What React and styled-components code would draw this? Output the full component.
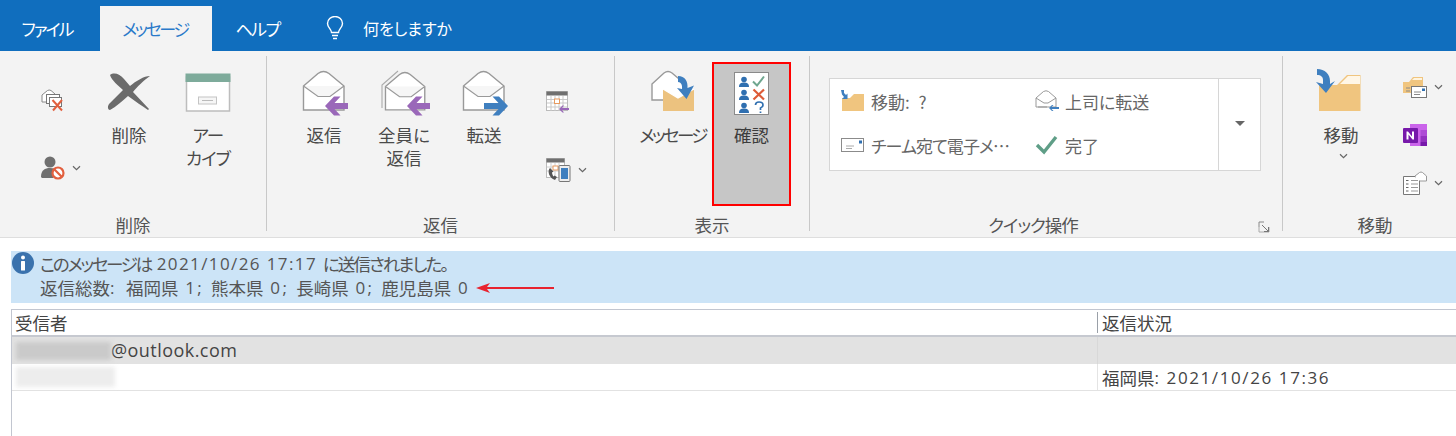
import React from "react";
import styled, { createGlobalStyle } from "styled-components";

const Global = createGlobalStyle`
  html, body { margin: 0; padding: 0; background: #fff; }
  body {
    width: 1456px; height: 436px; overflow: hidden;
    font-family: "Noto Sans CJK JP", "Noto Sans", sans-serif;
    font-feature-settings: "palt";
    color: #444;
  }
  * { box-sizing: border-box; }
`;

const TabBar = styled.div`
  height: 51px; background: #106ebe; display: flex; align-items: flex-end;
`;
const Tab = styled.div`
  height: 45px;
  width: ${p => p.$w}px;
  display: flex; align-items: center; justify-content: center;
  font-size: 17px; padding: 0 ${p => p.$pr || 0}px 1px 0;
  letter-spacing: ${p => p.$ls || 0}px;
  color: ${p => (p.$active ? "#2a79c9" : "#fff")};
  background: ${p => (p.$active ? "#f3f3f3" : "transparent")};
`;
const Search = styled.div`
  height: 45px; margin-left: 22px; display: flex; align-items: center; gap: 19px;
  color: #fff; font-size: 16px; padding-bottom: 1px;
`;

const Ribbon = styled.div`
  height: 187px; background: #f3f3f3; border-bottom: 1px solid #dedede;
  display: flex; align-items: flex-start;
`;
const Group = styled.div`
  width: ${p => p.$w}px; height: 186px; flex: none;
  display: flex; flex-direction: column;
`;
const Body = styled.div`
  height: 164px; display: flex; align-items: flex-start;
  padding: 19px 0 0 ${p => p.$left || 0}px;
`;
const Title = styled.div`
  position: relative;
  height: 22px; line-height: 20px; font-size: 17.5px; color: #555; text-align: center;
  letter-spacing: ${p => p.$ls || 0}px;
  padding: 0 ${p => p.$pr || 0}px 0 ${p => p.$pl || 0}px;
`;
const MoveTitle = styled(Title)`
  width: 174px;
`;
const Sep = styled.div`
  width: 1px; height: 175px; margin-top: 5px; background: #c8c8c8; flex: none;
`;
const Large = styled.div`
  width: ${p => p.$w}px; flex: none; display: flex; flex-direction: column; align-items: center;
  font-size: 17.5px; line-height: 23px; color: #4a4a4a; text-align: center;
`;
const KanaLabel = styled.span`
  letter-spacing: ${p => p.$ls}px;
`;
const IconBox = styled.div`
  height: 48px; width: 100%; margin-bottom: 5px;
  display: flex; justify-content: center; align-items: flex-start;
  padding-left: ${p => p.$nudge || 0}px;
  svg { display: block; }
`;
const MoveIconBox = styled(IconBox)`
  justify-content: flex-start; padding-left: 10px;
`;
const Chevron = styled.svg`
  width: 9px; height: 6px; flex: none; display: block;
`;
const Chev = () => (
  <Chevron viewBox="0 0 9 6">
    <path d="M1 1.2 4.5 4.6 8 1.2" fill="none" stroke="#666" strokeWidth="1.2" />
  </Chevron>
);
const MoveChevron = styled.div`
  margin-top: 7px; margin-left: 4px;
`;
const Small = styled.div`
  flex: none; width: ${p => p.$w}px;
  padding: ${p => p.$top}px 0 0 ${p => p.$left}px;
  display: flex; flex-direction: column; gap: ${p => p.$gap}px;
`;
const SmallItem = styled.div`
  height: 24px; display: flex; align-items: center; gap: 7px;
  svg:first-child { display: block; }
`;
const Confirm = styled.div`
  width: 79px; height: 144px; margin-top: -8px; flex: none;
  border: 2px solid #f00; background: #c6c6c6; padding-top: 8px;
  display: flex; flex-direction: column; align-items: center;
  font-size: 17.5px; line-height: 23px; color: #3c3c3c;
`;
const Gallery = styled.div`
  width: 432px; height: 93px; margin: 8px 0 0 19px;
  background: #fff; border: 1px solid #d6d6d6; display: flex;
`;
const GalleryGrid = styled.div`
  width: 389px; display: grid; grid-template-columns: 194px 1fr; grid-template-rows: 44px 44px;
  padding: 0 0 0 11px; border-right: 1px solid #d6d6d6;
`;
const QuickItem = styled.div`
  display: flex; align-items: center; gap: 6px; font-size: 17px; color: #666; white-space: pre;
  letter-spacing: ${p => p.$ls || 0}px;
`;
const QuickMark = styled.span`
  letter-spacing: 2.5px;
`;
const DropDown = styled.div`
  flex: 1; display: flex; align-items: center; justify-content: center;
`;
const Caret = styled.div`
  width: 0; height: 0; border-left: 5px solid transparent; border-right: 5px solid transparent;
  border-top: 5px solid #666; margin-top: -2px;
`;
const Launcher = styled.svg`
  position: absolute; right: 12px; top: 6px; width: 12px; height: 12px;
`;

const Info = styled.div`
  height: 52px; margin: 13px 0 0 11px; background: #cce4f7;
  display: flex; padding: 1px 0 0 1px;
`;
const InfoIcon = styled.svg`
  width: 22px; height: 22px; flex: none; margin-right: 6px;
`;
const InfoText = styled.div`
  font-size: 17.5px; line-height: 24px; color: #555; white-space: nowrap;
`;
const InfoLine = styled.div`
  display: flex; align-items: center; white-space: pre;
`;
const Lat = styled.span`
  font-family: "Open Sans", sans-serif; font-size: 17px; letter-spacing: ${p => p.$ls || 1.4}px;
`;
const Squeezed = styled.span`
  letter-spacing: ${p => p.$ls}px;
`;
const RedArrow = styled.svg`
  width: 78px; height: 12px; margin-left: 6px; flex: none;
`;
const Table = styled.div`
  margin: 6px 0 0 11px; height: 127px; border-left: 1px solid #c2c6d0; border-top: 1px solid #c2c6d0;
  font-size: 17.5px; color: #444;
`;
const Row = styled.div`
  display: grid; grid-template-columns: 1085px 1fr; height: ${p => p.$h}px;
  background: ${p => p.$bg || "#fff"};
  border-bottom: ${p => p.$bb || "none"};
`;
const Cell = styled.div`
  display: flex; align-items: center; padding-left: 4px; white-space: pre; line-height: 21px;
`;
const HeadCell = styled(Cell)`
  padding-left: 3px;
`;
const RightCell = styled(Cell)`
  border-left: 1px solid ${p => p.$line || "#e4e4e4"}; padding-left: 4px;
`;
const HeadRightCell = styled(RightCell)`
  height: 21px; margin-top: 2px;
`;
const Mail = styled.span`
  font-family: "Open Sans", sans-serif; font-size: 18px; letter-spacing: 0.45px;
`;
const Blur = styled.div`
  width: ${p => p.$w}px; height: ${p => p.$h}px; background: ${p => p.$c}; filter: blur(2px); flex: none;
`;

/* ---------- icons ---------- */
const Env = ({ x = 1, y = 1, s = 1 }) => (
  <g transform={`translate(${x} ${y}) scale(${s})`}>
    <path d="M0.5 15 15 2.5Q20.5 -1.5 26 2.5L41 15V39H0.5Z" fill="#fff" stroke="#999" strokeWidth="1.4" />
    <path d="M0.5 15 15 25.5H27L41 15" fill="#f6f6f6" stroke="#999" strokeWidth="1.2" />
  </g>
);
const ArrowL = ({ c = "#9a68b9", x = 0, y = 0 }) => (
  <path transform={`translate(${x} ${y})`} d="M23 36 32 26.5H38.5L32.5 33H46V39H32.5L38.5 45.5H32Z" fill={c} />
);
const ArrowR = ({ x = 0, y = 0 }) => (
  <path transform={`translate(${x} ${y})`} d="M46 36 37 26.5H30.5L36.5 33H22V39H36.5L30.5 45.5H37Z" fill="#3f7fbf" />
);
const ReplyIcon = () => (
  <svg width="48" height="48" viewBox="0 0 48 48"><Env /><ArrowL /></svg>
);
const ReplyAllIcon = () => (
  <svg width="50" height="48" viewBox="0 0 50 48">
    <path d="M1 38V15L17 1" fill="none" stroke="#aaa" strokeWidth="1.1" />
    <Env x={4} y={2} s={0.97} /><ArrowL x={3} />
  </svg>
);
const ForwardIcon = () => (
  <svg width="48" height="48" viewBox="0 0 48 48"><Env /><ArrowR /></svg>
);
const DeleteIconSvg = styled.svg`
  margin-top: 3px;
`;
const DeleteX = () => (
  <DeleteIconSvg width="44" height="40" viewBox="0 0 44 40">
    <path d="M3 2C7 -1 13 1 17 6L23 13C29 8 37 3 43 3C37 7 30 14 26 19L42 36 41 37C35 33 28 28 21 23C15 28 9 34 3 37C1 37 0 34 2 31L16 17C11 12 5 8 3 2Z" fill="#6b6b6b" />
  </DeleteIconSvg>
);
const ArchiveIcon = () => (
  <DeleteIconSvg width="46" height="40" viewBox="0 0 46 40">
    <rect x="1.5" y="4" width="43" height="34" fill="#fff" stroke="#bdbdbd" strokeWidth="1.5" />
    <rect x="0.5" y="0.5" width="45" height="8.5" fill="#7eab9b" />
    <rect x="13.5" y="24" width="18" height="7" fill="#f6f6f6" stroke="#c4c4c4" />
    <path d="M17 27.5H28" stroke="#bbb" />
  </DeleteIconSvg>
);
const IgnoreIcon = () => (
  <svg width="24" height="24" viewBox="0 0 24 24">
    <path d="M1 7 6.500 2.500Q8 1.500 10 2.500L14 6V14H1Z" fill="#fff" stroke="#888" />
    <rect x="5.500" y="6.500" width="13" height="9" fill="#fff" stroke="#777" />
    <rect x="8.500" y="9.500" width="12" height="9" fill="#fff" stroke="#777" />
    <path d="M11.500 12 21 22.500M21 12 12 22.500" stroke="#e2603f" strokeWidth="2" />
  </svg>
);
const BlockIcon = () => (
  <svg width="24" height="24" viewBox="0 0 24 24">
    <circle cx="9" cy="6" r="5.500" fill="#6f6f6f" />
    <path d="M0 21C0 14 4 12 9 12C13 12 15 13 16 15L12 22H1Z" fill="#6f6f6f" />
    <circle cx="17" cy="17" r="5.500" fill="#fff" stroke="#e2603f" strokeWidth="2.200" />
    <path d="M13.500 13.500 20.500 20.500" stroke="#e2603f" strokeWidth="2.200" />
  </svg>
);
const CalReplyIcon = () => (
  <svg width="24" height="24" viewBox="0 0 24 24">
    <rect x="0.500" y="0.500" width="21" height="19" fill="#fff" stroke="#bbb" />
    <rect x="0.500" y="0.500" width="21" height="4" fill="#6f6f6f" />
    <path d="M5 5V20M9 5V20M13 5V20M17 5V20M1 8.500H21M1 12H21M1 16H21" stroke="#c9c9c9" />
    <rect x="8.500" y="8" width="5" height="4.500" fill="#fff" stroke="#e79a5f" />
    <path d="M13 18 16.500 14.500H18L16 17H23V19H16L18 21.500H16.500Z" fill="#9a68b9" />
  </svg>
);
const CalPhoneIcon = () => (
  <svg width="25" height="24" viewBox="0 0 25 24">
    <rect x="0.500" y="0.500" width="18" height="19" fill="#fff" stroke="#bbb" />
    <rect x="0.500" y="0.500" width="18" height="4" fill="#6f6f6f" />
    <path d="M5 5V20M9 5V20M13 5V20M1 9H18M1 13H18" stroke="#d0d0d0" />
    <rect x="7" y="8" width="5" height="4" fill="#fff" stroke="#e79a5f" />
    <path d="M4 10C1 13 3 20 9 22L11 19 8.500 17.500 7.500 18.500C6.500 17 6 15.500 6 14.500L7.500 13.500Z" fill="#555" />
    <rect x="13" y="7.500" width="11" height="16" rx="1" fill="#eee" stroke="#777" />
    <rect x="15" y="10" width="7" height="11" fill="#3f7fbf" />
  </svg>
);
const MessageIcon = () => (
  <svg width="44" height="46" viewBox="0 0 44 46">
    <path d="M1 14 13 3Q17 0 21 3L34 14V30H1Z" fill="#fff" stroke="#999" strokeWidth="1.400" />
    <path d="M12 19 27 28 43 19V41H12Z" fill="#ecc27f" />
    <path d="M12 19 27 28 43 19" fill="none" stroke="#fff" strokeWidth="1.400" />
    <path d="M27 6C34 6 37 11 36.500 18L43 15.500 35.500 29 26 18 31 19C31.500 15 30 12 27 12Z" fill="#3f7fbf" />
  </svg>
);
const Person = ({ x, y }) => (
  <g transform={`translate(${x} ${y})`} fill="#2f6fb0">
    <circle cx="5" cy="2.500" r="2.800" />
    <path d="M0 10C0 6.500 2 5.500 5 5.500 8 5.500 10 6.500 10 10Z" />
  </g>
);
const ConfirmSvg = styled.svg`
  display: block; margin-bottom: 8px;
`;
const ConfirmIcon = () => (
  <ConfirmSvg width="35" height="43" viewBox="0 0 35 43">
    <rect x="0.500" y="0.500" width="34" height="42" fill="#fff" stroke="#8a8a8a" />
    <Person x={5} y={5} /><Person x={5} y={18} /><Person x={5} y={31} />
    <path d="M19 9.500 23 13.500 30 4.500" fill="none" stroke="#6fa68f" strokeWidth="2" />
    <path d="M19.500 17.500 30 27.500M30 17.500 19.500 27.500" stroke="#dd5b37" strokeWidth="2.200" />
    <path d="M21.500 33Q21.500 30 25 30Q29 30 29 33Q29 35 26.500 36V38M26.500 39.500V41" fill="none" stroke="#2f6fb0" strokeWidth="1.700" />
  </ConfirmSvg>
);
const MoveSvg = styled.svg`
  margin-top: -1px;
`;
const MoveFolder = () => (
  <MoveSvg width="46" height="43" viewBox="0 0 46 43">
    <path d="M3 16H21L31 6H44.500V42H3Z" fill="#f0c57f" />
    <path d="M24 15 32 7H44V15Z" fill="#fff6e6" />
    <path d="M1 0C9 0 14 5 14 12V15L19 12 10 24 0 13 7 15V11C7 8 5 6 1 6Z" fill="#3f7fbf" />
  </MoveSvg>
);
const SmallMoveFolder = () => (
  <svg width="24" height="22" viewBox="0 0 24 22">
    <path d="M1 8H9L13 4H23V21H1Z" fill="#f0c57f" />
    <path d="M0 0 3 0V3L5 5 6.500 3.500V9H1L3 7 1 4.500Z" fill="#3f7fbf" />
  </svg>
);
const FwdMgrIcon = () => (
  <svg width="24" height="22" viewBox="0 0 24 22">
    <path d="M1 8 8.500 1.500Q11 0 13.500 1.500L21 8V17H1Z" fill="#fff" stroke="#999" />
    <path d="M1 8 9 13H13L21 8" fill="none" stroke="#999" />
    <path d="M14 18 17 15H18.500L16.500 17H24V19H16.500L18.500 21H17Z" fill="#3f7fbf" />
    <path d="M3 17H12" stroke="#999" />
  </svg>
);
const TeamMailIcon = () => (
  <svg width="24" height="18" viewBox="0 0 24 18">
    <rect x="0.500" y="2.500" width="22" height="13" fill="#fff" stroke="#8b8b8b" />
    <rect x="18" y="4.500" width="3" height="3" fill="#2f6fb0" />
    <path d="M5 10H13M5 12.500H11" stroke="#aaa" />
  </svg>
);
const CheckIcon = () => (
  <svg width="24" height="20" viewBox="0 0 24 20">
    <path d="M2 10 9 17 21 2" fill="none" stroke="#5f9e87" strokeWidth="3.400" />
  </svg>
);
const RulesFolderIcon = () => (
  <svg width="24" height="24" viewBox="0 0 24 24">
    <path d="M0 7H6L10 2H20V18H0Z" fill="#f0c57f" />
    <path d="M9 5 11 3H19V5Z" fill="#fff4de" />
    <rect x="8.500" y="11.500" width="15" height="11" fill="#fff" stroke="#777" />
    <path d="M11 17H18M11 19.500H17M3 13H7M3 16H7" stroke="#8a8a8a" />
    <rect x="19" y="13.500" width="3" height="2.500" fill="#2f6fb0" />
  </svg>
);
const OneNoteIcon = () => (
  <svg width="24" height="24" viewBox="0 0 24 24">
    <rect x="7" y="1" width="17" height="22" fill="#ca64ea" />
    <rect x="17.500" y="7" width="6.500" height="6" fill="#ae4bd5" />
    <rect x="17.500" y="13" width="6.500" height="6" fill="#9332bf" />
    <rect x="17.500" y="19" width="6.500" height="4" fill="#7719aa" />
    <rect x="0" y="5" width="15" height="15" rx="1" fill="#7719aa" />
    <path d="M3.500 16.500V8.500H5L9 13.500V8.500H11V16.500H9.500L5.500 11.500V16.500Z" fill="#fff" />
  </svg>
);
const FormIcon = () => (
  <svg width="24" height="24" viewBox="0 0 24 24">
    <path d="M0.500 5.500H13V23.500H0.500Z" fill="#fff" stroke="#777" />
    <path d="M13 5.500H16.500V23.500H4" fill="#fff" stroke="#777" />
    <path d="M8 9.500H15M8 13H15M8 16.500H15M8 20H15" stroke="#999" />
    <path d="M3 9.500H5.500M3 13H5.500M3 16.500H5.500M3 20H5.500" stroke="#666" />
    <path d="M12 5 16.500 1.500Q18 0.500 19.500 1.500L23.500 5V10H17" fill="#fff" stroke="#999" />
  </svg>
);
const Bulb = () => (
  <svg width="18" height="25" viewBox="0 0 18 25" fill="none" stroke="#fff" strokeWidth="1.400">
    <path d="M5.500 16.500C5.500 13 1.500 11.500 1.500 7.500A7.500 7 0 0 1 16.500 7.500C16.500 11.500 12.500 13 12.500 16.500Z" />
    <path d="M6 19.500H12M7 22.500H11" />
  </svg>
);

export default function App() {
  return (
    <>
      <Global />
      <TabBar>
        <Tab $w={100} $pr={6} $ls={-2}>ファイル</Tab>
        <Tab $w={112} $pr={2} $active $ls={-2.4}>メッセージ</Tab>
        <Tab $w={92} $pr={1} $ls={-1.6}>ヘルプ</Tab>
        <Search><Bulb />何をしますか</Search>
      </TabBar>

      <Ribbon>
        <Group $w={266}>
          <Body $left={30}>
            <Small $w={60} $left={11} $top={18} $gap={44}>
              <SmallItem><IgnoreIcon /></SmallItem>
              <SmallItem><BlockIcon /><Chev /></SmallItem>
            </Small>
            <Large $w={78}><IconBox><DeleteX /></IconBox>削除</Large>
            <Large $w={80}><IconBox><ArchiveIcon /></IconBox><KanaLabel $ls={-1}>アー<br />カイブ</KanaLabel></Large>
          </Body>
          <Title>削除</Title>
        </Group>
        <Sep />
        <Group $w={347}>
          <Body $left={17}>
            <Large $w={80}><IconBox $nudge={4}><ReplyIcon /></IconBox>返信</Large>
            <Large $w={80}><IconBox $nudge={3}><ReplyAllIcon /></IconBox>全員に<br />返信</Large>
            <Large $w={80}><IconBox $nudge={4}><ForwardIcon /></IconBox>転送</Large>
            <Small $w={70} $left={22} $top={21} $gap={43}>
              <SmallItem><CalReplyIcon /></SmallItem>
              <SmallItem><CalPhoneIcon /><Chev /></SmallItem>
            </Small>
          </Body>
          <Title>返信</Title>
        </Group>
        <Sep />
        <Group $w={194}>
          <Body $left={18}>
            <Large $w={79}><IconBox><MessageIcon /></IconBox><KanaLabel $ls={-2.6}>メッセージ</KanaLabel></Large>
            <Confirm><ConfirmIcon />確認</Confirm>
          </Body>
          <Title>表示</Title>
        </Group>
        <Sep />
        <Group $w={472}>
          <Body>
            <Gallery>
              <GalleryGrid>
                <QuickItem><SmallMoveFolder /><span>移動<QuickMark>: ?</QuickMark></span></QuickItem>
                <QuickItem><FwdMgrIcon />上司に転送</QuickItem>
                <QuickItem $ls={-0.9}><TeamMailIcon />チーム宛て電子メ…</QuickItem>
                <QuickItem><CheckIcon />完了</QuickItem>
              </GalleryGrid>
              <DropDown><Caret /></DropDown>
            </Gallery>
          </Body>
          <Title $ls={-1} $pr={26}>
            クイック操作
            <Launcher viewBox="0 0 12 12">
              <path d="M1 6V1H6" fill="none" stroke="#888" />
              <path d="M1 6V11H11V6" fill="none" stroke="#aaa" />
              <path d="M4 4 10.500 10.500M10.500 6V10.500H6" fill="none" stroke="#777" />
            </Launcher>
          </Title>
        </Group>
        <Sep />
        <Group $w={173}>
          <Body $left={23}>
            <Large $w={70}>
              <MoveIconBox><MoveFolder /></MoveIconBox>
              移動
              <MoveChevron><Chev /></MoveChevron>
            </Large>
            <Small $w={80} $left={27} $top={5} $gap={24}>
              <SmallItem><RulesFolderIcon /><Chev /></SmallItem>
              <SmallItem><OneNoteIcon /></SmallItem>
              <SmallItem><FormIcon /><Chev /></SmallItem>
            </Small>
          </Body>
          <MoveTitle $pl={10}>移動</MoveTitle>
        </Group>
      </Ribbon>

      <Info>
        <InfoIcon viewBox="0 0 22 22">
          <circle cx="11" cy="11" r="11" fill="#3a72ad" />
          <circle cx="11" cy="5.500" r="2" fill="#fff" />
          <rect x="9" y="9" width="4" height="9.500" rx="0.500" fill="#fff" />
        </InfoIcon>
        <InfoText>
          <InfoLine>
            <Squeezed $ls={-2.3}>このメッセージは</Squeezed>
            <Lat> 2021/10/26 17:17 </Lat>
            <Squeezed $ls={-1.9}>に送信されました。</Squeezed>
          </InfoLine>
          <InfoLine>
            返信総数<Lat $ls={3.5}>: </Lat>福岡県<Lat $ls={2.4}> 1; </Lat>熊本県<Lat $ls={2.4}> 0; </Lat>長崎県<Lat $ls={2.4}> 0; </Lat>鹿児島県<Lat $ls={2.4}> 0</Lat>
            <RedArrow viewBox="0 0 78 12">
              <path d="M0 6 14 1 11 5H78V7H11L14 11Z" fill="#e8232f" />
            </RedArrow>
          </InfoLine>
        </InfoText>
      </Info>

      <Table>
        <Row $h={27} $bb="2px solid #c6c9d0">
          <HeadCell>受信者</HeadCell>
          <HeadRightCell $line="#9aa0a8">返信状況</HeadRightCell>
        </Row>
        <Row $h={27} $bg="#e2e2e2">
          <Cell><Blur $w={95} $h={18} $c="#cacaca" /><Mail>@outlook.com</Mail></Cell>
          <RightCell $line="#d8d8d8" />
        </Row>
        <Row $h={27} $bb="1px solid #e2e2e2">
          <Cell><Blur $w={99} $h={20} $c="#ededed" /></Cell>
          <RightCell>福岡県<Lat $ls={1.6}>: 2021/10/26 17:36</Lat></RightCell>
        </Row>
      </Table>
    </>
  );
}
